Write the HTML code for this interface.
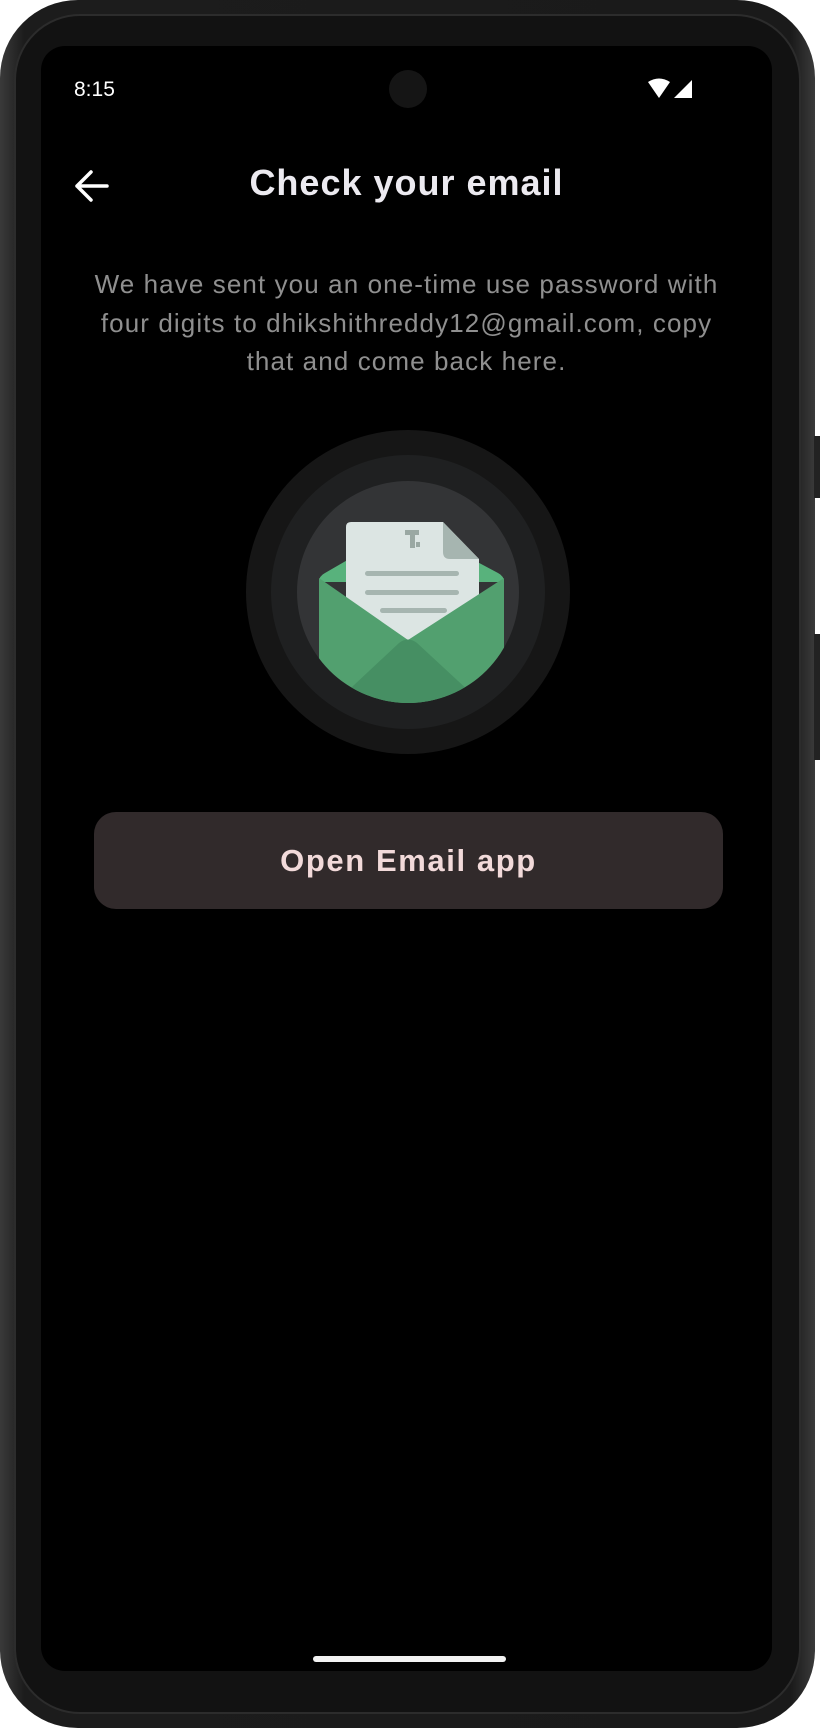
<!DOCTYPE html>
<html><head><meta charset="utf-8"><style>
html,body{margin:0;padding:0;background:#fff;width:825px;height:1728px;overflow:hidden;font-family:"Liberation Sans",sans-serif}
.phone{position:absolute;left:0;top:0;width:815px;height:1728px;border-radius:78px;background:linear-gradient(90deg,#3a3a3a,#1c1c1c 3%,#1a1a1a 97%,#3a3a3a);}
.bez{position:absolute;left:14px;top:14px;right:14px;bottom:14px;border-radius:66px;background:#121212;border:2px solid #2c2c2c}
.btn1{position:absolute;left:814px;top:436px;width:6px;height:62px;background:#222}
.btn2{position:absolute;left:814px;top:634px;width:6px;height:126px;background:#222}
.screen{position:absolute;left:41px;top:46px;width:731px;height:1625px;border-radius:24px;background:#000;overflow:hidden;color:#fff}
.abs{position:absolute}
</style></head><body>
<div class="phone"><div class="bez"></div></div>
<div class="btn1"></div><div class="btn2"></div>
<div class="screen">
 <div class="abs" style="left:33px;top:32px;font-size:21px;color:#fff">8:15</div>
 <div class="abs" style="left:348px;top:24px;width:38px;height:38px;border-radius:50%;background:#151515"></div>
 <svg class="abs" style="left:605px;top:32px" width="56" height="22" viewBox="0 0 56 22">
  <path d="M2 4 Q13 -3 24 4 L13 20 Z" fill="#fff"/>
  <path d="M46 2 L46 20 L28 20 Z" fill="#fff"/>
 </svg>
 <svg class="abs" style="left:30px;top:120px" width="42" height="40" viewBox="0 0 42 40">
  <path d="M36 20 H6 M20 6 L6 20 L20 34" stroke="#fff" stroke-width="3.5" fill="none" stroke-linecap="round" stroke-linejoin="round"/>
 </svg>
 <div class="abs" style="left:0;width:731px;top:116px;text-align:center;font-size:36px;font-weight:bold;color:#eceaf0;letter-spacing:1px">Check your email</div>
 <div class="abs" style="left:-20px;width:771px;top:219px;text-align:center;font-size:26px;line-height:38.5px;color:#8f8f8f;letter-spacing:1.1px">We have sent you an one-time use password with<br>four digits to dhikshithreddy12@gmail.com, copy<br>that and come back here.</div>
 <svg class="abs" style="left:205px;top:384px" width="324" height="324" viewBox="0 0 324 324">
  <defs><clipPath id="c"><circle cx="162" cy="162" r="111"/></clipPath></defs>
  <circle cx="162" cy="162" r="162" fill="#161616"/>
  <circle cx="162" cy="162" r="137" fill="#1f2021"/>
  <circle cx="162" cy="162" r="111" fill="#333436"/>
  <g clip-path="url(#c)">
   <path d="M73 152 Q73 146 79 143 L162 95 L252 143 Q258 146 258 152 Z" fill="#58b27c"/>
  </g>
  <path d="M100 97 Q100 92 105 92 L197 92 L233 129 L233 240 L100 240 Z" fill="#dce5e3"/>
  <path d="M197 92 L197 122 Q197 129 204 129 L233 129 Z" fill="#a6b5b0"/>
  <rect x="159" y="100" width="14" height="5" fill="#9aa8a3"/><rect x="164" y="105" width="5" height="13" fill="#9aa8a3"/><rect x="170" y="112" width="4" height="5" fill="#9aa8a3"/>
  <rect x="119" y="141" width="94" height="5" rx="2.5" fill="#a6b5b0"/>
  <rect x="119" y="160" width="94" height="5" rx="2.5" fill="#a6b5b0"/>
  <rect x="134" y="178" width="67" height="5" rx="2.5" fill="#a6b5b0"/>
  <g clip-path="url(#c)">
   <path d="M73 148 L162 210 L258 148 L258 300 L73 300 Z" fill="#52a06f"/>
   <path d="M60 300 L153 213 Q162 206 171 213 L265 300 Z" fill="#468f63"/>
  </g>
 </svg>
 <div class="abs" style="left:53px;top:766px;width:629px;height:97px;border-radius:22px;background:#312a2b;text-align:center;line-height:97px;font-size:31px;font-weight:bold;color:#f2dada;letter-spacing:1.6px">Open Email app</div>
 <div class="abs" style="left:272px;top:1610px;width:193px;height:6px;border-radius:3px;background:#f2f2f2"></div>
</div>
</body></html>
